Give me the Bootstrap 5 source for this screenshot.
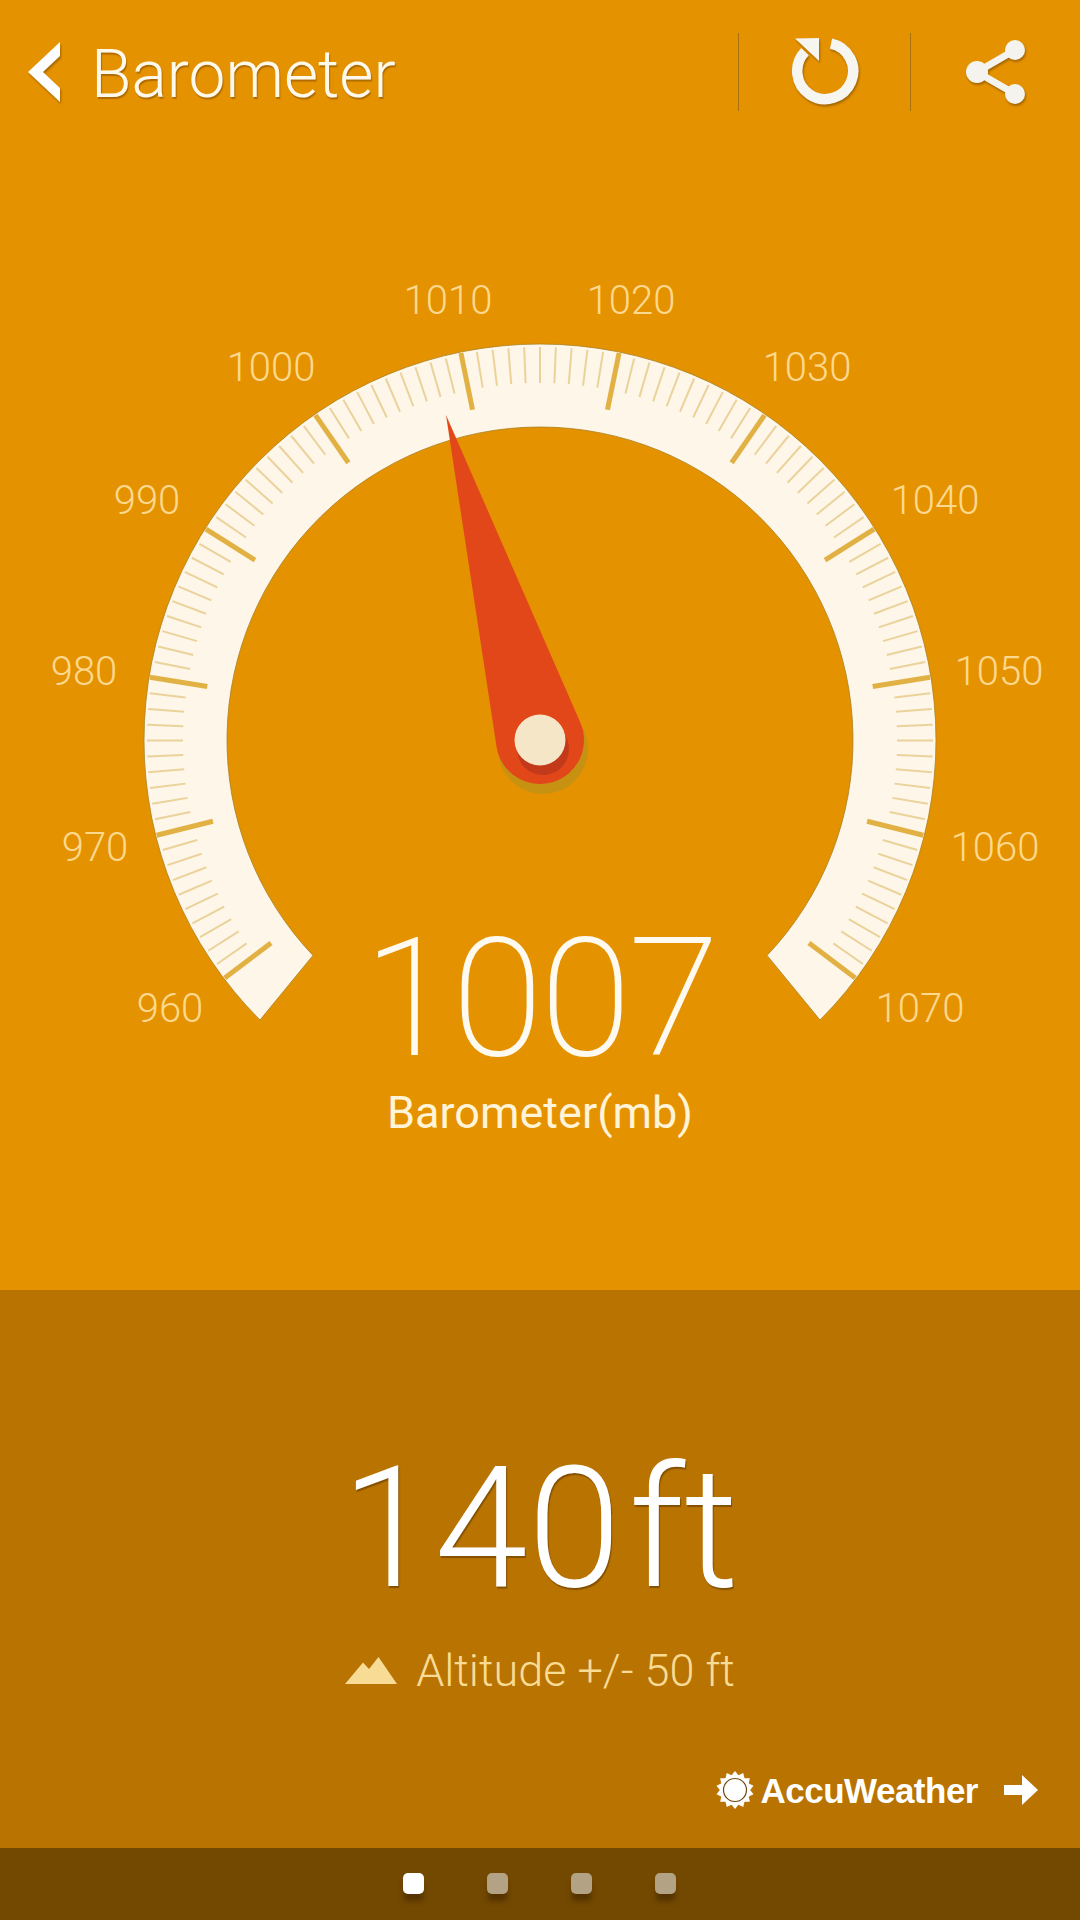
<!DOCTYPE html>
<html lang="en">
<head>
  <meta charset="UTF-8">
  <title>Barometer</title>
  <meta name="viewport" content="width=device-width, initial-scale=1">
  <link href="https://cdn.jsdelivr.net/npm/bootstrap@5.3.0/dist/css/bootstrap.min.css" rel="stylesheet">
  <style>
    body {
      background: #e59200;
      font-family: Roboto, "Liberation Sans", sans-serif;
      color: #fff;
    }
    .screen { width: 1080px; height: 1920px; overflow: hidden; }
    .top-area { background: #e59200; height: 1290px; }
    .app-bar { height: 140px; padding-top: 4px; }
    .back-chevron { margin-left: 28px; margin-right: 30px; }
    .app-title {
      font-size: 66px; font-weight: 300; line-height: 1; padding-top: 6px;
      color: #fff9ec; text-shadow: 1px 2px 1px rgba(120, 70, 0, .5);
    }
    .bar-action { height: 78px; width: 172px; border-left: 1px solid #a8720f; }
    .bar-action.share-action { width: 170px; }
    .bar-icon { filter: drop-shadow(1px 2px 1px rgba(110, 65, 0, .55)); }
    .gauge-wrap { height: 900px; }
    .gauge-svg { display: block; }
    .gauge-label { font-family: Roboto, sans-serif; font-size: 40px; font-weight: 300; fill: #fcd98f; }
    .readout { left: 0; right: 0; top: 794px; }
    .readout-num { font-size: 166px; font-weight: 200; line-height: 130px; color: #fffaf0; letter-spacing: -3px; }
    .readout-unit { font-size: 45px; font-weight: 400; line-height: 1; margin-top: 26px; color: #fff3d8; }
    .alt-area { background: #b87300; height: 558px; padding-top: 155px; }
    .alt-num { font-size: 168px; font-weight: 300; line-height: 1; text-shadow: 1px 2px 1px rgba(80, 45, 0, .5); }
    .alt-unit { margin-left: 8px; }
    .alt-note { color: #f8dc96; font-size: 45px; font-weight: 300; line-height: 1; margin-top: 35px; gap: 19px; }
    .accu-row { margin-top: 78px; padding-right: 42px; }
    .accu-name {
      font-family: "Liberation Sans", Arial, sans-serif; font-size: 35px; font-weight: 700;
      letter-spacing: -.5px; line-height: 1; margin-left: 6px; margin-right: 26px;
    }
    .pager-bar { background: #734800; height: 72px; gap: 63px; padding-right: 2px; padding-bottom: 2px; }
    .pager-dot {
      width: 21px; height: 21px; border-radius: 5px; background: #b3a283;
      box-shadow: 0 8px 5px -1px rgba(60, 35, 0, .55);
    }
    .pager-dot.on { background: #fff; }
  </style>
</head>
<body>
  <div class="screen d-flex flex-column">
    <div class="top-area">
      <div class="app-bar d-flex align-items-center">
        <svg class="back-chevron bar-icon" width="33" height="60" viewBox="0 0 33 60">
          <path d="M32 0 L0 30 L32 60 L32 46 L15 30 L32 14 Z" fill="#fff"/>
        </svg>
        <div class="app-title flex-grow-1">Barometer</div>
        <div class="bar-action d-flex align-items-center justify-content-center">
          <svg class="bar-icon" width="72" height="72" viewBox="0 0 72 72">
            <path d="M42 7.7 A28 28 0 1 1 16 15.7" fill="none" stroke="#f7f5f0" stroke-width="10.5"/>
            <path d="M6 2.5 L30 2 L30 25 Z" fill="#f7f5f0"/>
          </svg>
        </div>
        <div class="bar-action share-action d-flex align-items-center justify-content-center">
          <svg class="bar-icon" width="62" height="68" viewBox="0 0 62 68">
            <path d="M50 12 L12 34 L50 56" fill="none" stroke="#f5f3ee" stroke-width="7"/>
            <circle cx="50" cy="12" r="10" fill="#f5f3ee"/>
            <circle cx="12" cy="34" r="11" fill="#f5f3ee"/>
            <circle cx="50" cy="56" r="10" fill="#f5f3ee"/>
          </svg>
        </div>
      </div>
      <div class="gauge-wrap position-relative">
        <svg id="gauge" class="gauge-svg" width="1080" height="900" viewBox="0 140 1080 900"></svg>
        <div class="readout position-absolute text-center">
          <div class="readout-num">1007</div>
          <div class="readout-unit">Barometer(mb)</div>
        </div>
      </div>
    </div>
    <div class="alt-area">
      <div class="alt-num text-center">140<span class="alt-unit">ft</span></div>
      <div class="alt-note d-flex align-items-center justify-content-center">
        <svg width="52" height="27" viewBox="0 0 52 27">
          <path d="M0 27 L18 5.5 L24 12 L33.5 0 L52 27 Z" fill="#f8dc96"/>
        </svg>
        <span>Altitude +/- 50 ft</span>
      </div>
      <div class="accu-row d-flex align-items-center justify-content-end">
        <svg width="38" height="38" viewBox="-19 -19 38 38">
          <g id="sunRays" fill="#fff"></g>
          <circle r="15" fill="#fff"/>
          <circle r="11.5" fill="#fff" stroke="#6b4a10" stroke-width="1.2"/>
        </svg>
        <span class="accu-name">AccuWeather</span>
        <svg width="34" height="30" viewBox="0 0 34 30">
          <path d="M0 10 H18 V0 L34 15 L18 30 V20 H0 Z" fill="#fff"/>
        </svg>
      </div>
    </div>
    <div class="pager-bar d-flex align-items-center justify-content-center">
      <div class="pager-dot on"></div>
      <div class="pager-dot"></div>
      <div class="pager-dot"></div>
      <div class="pager-dot"></div>
    </div>
  </div>

  <script src="https://cdn.jsdelivr.net/npm/bootstrap@5.3.0/dist/js/bootstrap.bundle.min.js"></script>
  <script>
    const NS = 'http://www.w3.org/2000/svg';
    const cx = 540, cy = 740;
    const svg = document.getElementById('gauge');

    function el(parent, name, attrs, text) {
      const node = document.createElementNS(NS, name);
      for (const k in attrs) node.setAttribute(k, attrs[k]);
      if (text) node.textContent = text;
      parent.appendChild(node);
      return node;
    }

    // angle in degrees, clockwise from straight up
    function pt(r, deg) {
      const a = deg * Math.PI / 180;
      return [cx + r * Math.sin(a), cy - r * Math.cos(a)];
    }

    // ring, the inner edge stops a bit short of the outer one
    const R = 396, Ri = 313;
    const o1 = pt(R, -135), o2 = pt(R, 135), i1 = pt(Ri, -133.5), i2 = pt(Ri, 133.5);
    el(svg, 'path', {
      d: `M${o1} A${R} ${R} 0 1 1 ${o2} L${i2} A${Ri} ${Ri} 0 1 0 ${i1} Z`,
      fill: '#fdf6e9', stroke: '#a8801f', 'stroke-width': .8
    });

    // ticks, 10 steps for every 10 mb
    const step = 2.31;
    for (let i = 0; i <= 110; i++) {
      const deg = -127.05 + i * step;
      const major = i % 10 === 0;
      const [x1, y1] = pt(major ? 395 : 393, deg);
      const [x2, y2] = pt(major ? 337 : 357, deg);
      el(svg, 'line', { x1, y1, x2, y2, stroke: major ? '#e2b144' : '#ebd29b', 'stroke-width': major ? 5 : 2 });
    }

    // scale labels
    const labels = [
      ['960', 170, 1008], ['970', 95, 847], ['980', 84, 671], ['990', 147, 500],
      ['1000', 271, 367], ['1010', 448, 300], ['1020', 631, 300], ['1030', 807, 367],
      ['1040', 935, 500], ['1050', 999, 671], ['1060', 995, 847], ['1070', 920, 1008]
    ];
    labels.forEach(([t, x, y]) => {
      el(svg, 'text', { x, y: y + 14, 'text-anchor': 'middle', class: 'gauge-label' }, t);
    });

    // needle: tangents from the tip to the hub circle
    const tip = [446, 415], r = 44;
    const dx = tip[0] - cx, dy = tip[1] - cy, d = Math.hypot(dx, dy);
    const base = Math.atan2(dy, dx), off = Math.acos(r / d);
    const p1 = [cx + r * Math.cos(base + off), cy + r * Math.sin(base + off)];
    const p2 = [cx + r * Math.cos(base - off), cy + r * Math.sin(base - off)];
    const needle = `M${tip[0]} ${tip[1]} L${p1[0]} ${p1[1]} A${r} ${r} 0 1 1 ${p2[0]} ${p2[1]} Z`;
    el(svg, 'circle', { cx: cx + 3, cy: cy + 9, r: 45, fill: '#c79212' });
    el(svg, 'path', { d: needle, fill: '#e2471a' });
    el(svg, 'circle', { cx: cx + 3, cy: cy + 9, r: 26, fill: '#c23a1a' });
    el(svg, 'circle', { cx, cy, r: 25.5, fill: '#f6e6c8' });

    // little sun beside the AccuWeather name
    const rays = document.getElementById('sunRays');
    for (let i = 0; i < 14; i++) {
      el(rays, 'path', { d: 'M-4 -14 L0 -19 L4 -14 Z', transform: `rotate(${i * 360 / 14})` });
    }
  </script>
</body>
</html>
